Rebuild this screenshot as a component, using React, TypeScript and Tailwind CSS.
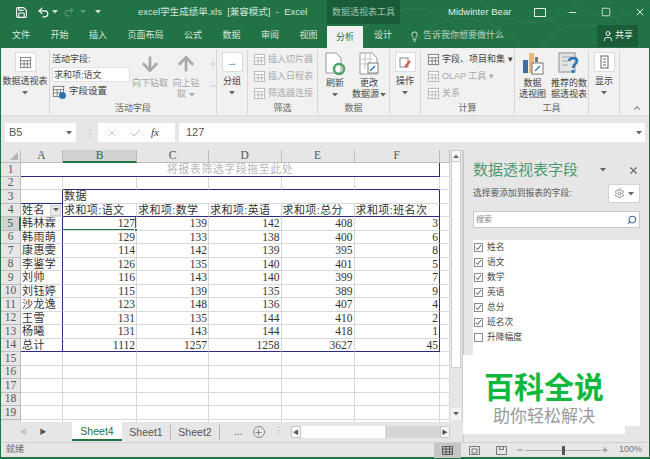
import { ReactNode } from 'react';
import { ArrowDown, ArrowUp, ChevronUp, Lightbulb, Minus, Plus, Redo2, Save, Search, Settings, Square, Undo2, User, X } from 'lucide-react';

const RIBBON_TABS = ['文件', '开始', '插入', '页面布局', '公式', '数据', '审阅', '视图'];

const ROWS = [
  ['韩林霖', '127', '139', '142', '408', '3'],
  ['韩雨萌', '129', '133', '138', '400', '6'],
  ['康惠雯', '114', '142', '139', '395', '8'],
  ['李鉴学', '126', '135', '140', '401', '5'],
  ['刘帅', '116', '143', '140', '399', '7'],
  ['刘钰婷', '115', '139', '135', '389', '9'],
  ['沙龙逸', '123', '148', '136', '407', '4'],
  ['王雪', '131', '135', '144', '410', '2'],
  ['杨曦', '131', '143', '144', '418', '1'],
  ['总计', '1112', '1257', '1258', '3627', '45'],
];

const FIELDS = [
  ['姓名', true],
  ['语文', true],
  ['数学', true],
  ['英语', true],
  ['总分', true],
  ['班名次', true],
  ['升降幅度', false],
] as const;

const HEADERS = ['求和项:语文', '求和项:数学', '求和项:英语', '求和项:总分', '求和项:班名次'];

function Caret({ className = 'text-[#666]' }: { className?: string }) {
  return (
    <svg width="6" height="4" viewBox="0 0 6 4" className={className}>
      <path d="M0 0h6L3 3.5z" fill="currentColor" />
    </svg>
  );
}

function Sheet({ dim }: { dim?: boolean }) {
  return (
    <svg width="13" height="13" viewBox="0 0 14 14" fill="none" stroke={dim ? '#b5b5b5' : '#7a7a7a'}>
      <rect x="1.5" y="1.5" width="11" height="11" fill="#fff" />
      <path d="M1.5 5h11M5.5 5v7.5M9 5v7.5M1.5 8.5h11" />
    </svg>
  );
}

function BoxButton({ label, icon }: { label: string; icon: ReactNode }) {
  return (
    <div className="flex flex-col items-center pt-[2px]">
      <div className="w-[21px] h-[20px] bg-white border border-[#dcdcdc] flex items-center justify-center">{icon}</div>
      <div className="mt-[4px] text-[9px] leading-[11px] whitespace-nowrap">{label}</div>
      <div className="mt-[4px]"><Caret /></div>
    </div>
  );
}

function Group({ width, label, children }: { width: string; label?: string; children: ReactNode }) {
  return (
    <div className={`${width} flex flex-col shrink-0 h-[64px] mt-[2px] border-r border-[#d6d6d6]`}>
      <div className="flex-1 min-h-0">{children}</div>
      <div className="h-[12px] text-center text-[9px] leading-[12px] text-[#666]">{label}</div>
    </div>
  );
}

function SmallRow({ icon, label, dim }: { icon: ReactNode; label: string; dim?: boolean }) {
  return (
    <div className={`h-[17px] flex items-center gap-[2px] text-[9px] whitespace-nowrap ${dim ? 'text-[#a8a8a8]' : 'text-[#444]'}`}>
      {icon}
      <span>{label}</span>
    </div>
  );
}

function Ribbon() {
  return (
    <div className="h-[68px] bg-[#f1f1f1] flex text-[#444] relative border-b border-[#dadada]">
      <Group width="w-[49px]">
        <div className="flex flex-col items-center pt-[2px]">
          <div className="w-[21px] h-[20px] bg-white border border-[#dcdcdc] flex items-center justify-center"><Sheet /></div>
          <div className="mt-[4px] text-[9px] leading-[11px] whitespace-nowrap">数据透视表</div>
          <div className="mt-[4px]"><Caret /></div>
        </div>
      </Group>

      <Group width="w-[167px]" label="活动字段">
        <div className="flex pl-[2px]">
          <div className="w-[78px] shrink-0">
            <div className="text-[9px] leading-[16px] mt-[1px]">活动字段:</div>
            <div className="h-[15px] bg-white border border-[#e2e2e2] text-[9px] leading-[14px] pl-[1px]">求和项:语文</div>
            <div className="flex items-center mt-[2px] text-[9.5px] leading-[14px]">
              <div className="relative">
                <Sheet />
                <div className="absolute right-[-1px] bottom-[-1px] w-[7px] h-[7px] rounded-full bg-[#2e75b6]" />
              </div>
              <span className="ml-[4px]">字段设置</span>
            </div>
          </div>
          <div className="w-[38px] ml-[1px] flex flex-col items-center text-[#a5a5a5] pt-[3px] shrink-0">
            <ArrowDown size={22} strokeWidth={3} className="text-[#a9a9a9]" />
            <div className="mt-[3px] text-[9px] leading-[11px] whitespace-nowrap">向下钻取</div>
          </div>
          <div className="w-[30px] ml-[2px] flex flex-col items-center text-[#a5a5a5] pt-[3px] shrink-0">
            <ArrowUp size={22} strokeWidth={3} className="text-[#a9a9a9]" />
            <div className="mt-[3px] text-[9px] leading-[11px] whitespace-nowrap">向上钻</div>
            <div className="text-[9px] leading-[11px] flex items-center gap-[3px]">取<Caret className="text-[#aaa]" /></div>
          </div>
          <div className="flex flex-col gap-[12px] pt-[9px] pl-[7px] text-[#b9c9d6]">
            <Plus size={10} />
            <Minus size={10} />
          </div>
        </div>
      </Group>

      <Group width="w-[31px]">
        <BoxButton label="分组" icon={<span className="text-[#2e75b6] text-[11px] font-bold leading-none">→</span>} />
      </Group>

      <Group width="w-[70px]" label="筛选">
        <div className="pl-[5px] pt-[1px]">
          <SmallRow dim icon={<Sheet dim />} label="插入切片器" />
          <SmallRow dim icon={<Sheet dim />} label="插入日程表" />
          <SmallRow dim icon={<Sheet dim />} label="筛选器连接" />
        </div>
      </Group>

      <Group width="w-[72px]" label="数据">
        <div className="flex pl-[5px] pt-[2px]">
          <div className="w-[24px] flex flex-col items-center">
            <svg width="22" height="24" viewBox="0 0 22 24" fill="none">
              <path d="M2 1h10l5 5v15H2z" fill="#fff" stroke="#9a9a9a" />
              <circle cx="15" cy="17" r="5" fill="none" stroke="#4aa564" strokeWidth="2.5" />
            </svg>
            <div className="mt-[2px] text-[9px] leading-[11px]">刷新</div>
            <div className="mt-[4px]"><Caret /></div>
          </div>
          <div className="w-[40px] ml-[2px] flex flex-col items-center">
            <svg width="22" height="24" viewBox="0 0 22 24" fill="none">
              <path d="M2 1h12l5 5v16H2z" fill="#fff" stroke="#9a9a9a" />
              <path d="M2 7h12M2 12h12M7 1v16M12 1v16" stroke="#c4c4c4" />
              <rect x="10" y="11" width="10" height="10" fill="#fff" stroke="#7a7a7a" />
              <path d="M12 19l5-5" stroke="#2e75b6" strokeWidth="1.4" />
            </svg>
            <div className="mt-[2px] text-[9px] leading-[11px]">更改</div>
            <div className="text-[9px] leading-[11px] flex items-center gap-[1px] whitespace-nowrap">数据源<Caret /></div>
          </div>
        </div>
      </Group>

      <Group width="w-[31px]">
        <BoxButton
          label="操作"
          icon={
            <svg width="13" height="13" viewBox="0 0 13 13" fill="none">
              <rect x="1" y="2" width="8" height="9" stroke="#888" />
              <path d="M6 11l5-6" stroke="#d9534f" strokeWidth="2" />
            </svg>
          }
        />
      </Group>

      <Group width="w-[94px]" label="计算">
        <div className="pl-[6px] pt-[1px]">
          <SmallRow icon={<Sheet />} label="字段、项目和集 ▾" />
          <SmallRow dim icon={<Sheet dim />} label="OLAP 工具 ▾" />
          <SmallRow dim icon={<Sheet dim />} label="关系" />
        </div>
      </Group>

      <Group width="w-[74px]" label="工具">
        <div className="flex pt-[2px] pl-[1px]">
          <div className="w-[33px] flex flex-col items-center">
            <svg width="22" height="24" viewBox="0 0 22 24" fill="none">
              <rect x="1" y="8" width="5" height="13" fill="#3d6ea5" />
              <rect x="7" y="1" width="5" height="20" fill="#e9b872" />
              <rect x="13" y="5" width="3" height="5" fill="#777" />
              <rect x="10" y="11" width="11" height="11" fill="#fff" stroke="#777" />
              <path d="M13 19l5-5" stroke="#2e75b6" strokeWidth="1.3" />
            </svg>
            <div className="mt-[2px] text-[9px] leading-[11px]">数据</div>
            <div className="text-[9px] leading-[11px] whitespace-nowrap">透视图</div>
          </div>
          <div className="w-[38px] flex flex-col items-center ml-[1px]">
            <svg width="22" height="24" viewBox="0 0 22 24" fill="none">
              <rect x="1" y="1" width="16" height="19" fill="#e4e4e4" stroke="#8f8f8f" />
              <path d="M4 5h10M4 9h6M4 13h6" stroke="#a5a5a5" />
              <path d="M11 9c1-4 8-4 8 0 0 3-4 3-4 7" stroke="#2e75b6" strokeWidth="2.6" />
              <rect x="13.6" y="18" width="2.8" height="3" fill="#2e75b6" />
            </svg>
            <div className="mt-[2px] text-[9px] leading-[11px] whitespace-nowrap">推荐的数</div>
            <div className="text-[9px] leading-[11px] whitespace-nowrap">据透视表</div>
          </div>
        </div>
      </Group>

      <Group width="w-[31px]">
        <BoxButton
          label="显示"
          icon={
            <svg width="9" height="14" viewBox="0 0 9 14" fill="none" stroke="#666">
              <rect x="1" y="1" width="7" height="12" />
              <path d="M3 4h3M3 7h3M3 10h3" />
            </svg>
          }
        />
      </Group>

      <ChevronUp size={10} strokeWidth={2.5} className="absolute right-[7px] bottom-[2px] text-[#666]" />
    </div>
  );
}

function SheetGrid() {
  const head = 'bg-[#e6e6e6] border-r border-b border-[#bdbdbd] flex items-center justify-center text-[11.5px] font-["Liberation_Serif",serif] text-[#555]';
  const line = 'border-r border-b border-[#d9d9d9]';
  const navyR = 'border-r border-b border-[#d9d9d9] border-r-[#2a2c80]';
  const navyB = 'border-r border-b border-[#d9d9d9] border-b-[#2a2c80]';
  const navyRB = 'border-r border-b border-[#d9d9d9] border-r-[#2a2c80] border-b-[#2a2c80]';
  const num = 'text-right pr-[1px] text-[11.5px] leading-[13px] font-["Liberation_Serif",serif] text-[#333] overflow-hidden';
  const cjk = 'pl-[1px] text-[11px] tracking-[0.4px] leading-[13px] text-[#333] whitespace-nowrap overflow-hidden';

  return (
    <div className="w-[449px] h-[272px] overflow-hidden bg-white">
      <div className="grid grid-cols-[20px_42px_74px_72px_72.5px_73px_85.5px_9.5px] grid-rows-[13px_repeat(20,13.5px)]">
        <div className="bg-[#e6e6e6] border-r border-b border-[#bdbdbd] flex items-end justify-end pr-[2px] pb-[2px]">
          <div className="w-0 h-0 border-l-[8px] border-l-transparent border-b-[8px] border-b-[#b5b5b5]" />
        </div>
        <div className={head}>A</div>
        <div className="bg-[#d2d2d2] border-r border-b-2 border-r-[#bdbdbd] border-b-[#217346] flex items-center justify-center text-[11.5px] font-['Liberation_Serif',serif] text-[#2a6a45]">B</div>
        <div className={head}>C</div>
        <div className={head}>D</div>
        <div className={head}>E</div>
        <div className={head}>F</div>
        <div className={head}></div>

        <div className={head}>1</div>
        <div className={`col-span-6 text-center text-[11px] leading-[13px] text-[#b8b8b8] tracking-[0.5px] ${navyRB}`}>将报表筛选字段拖至此处</div>
        <div className={line}></div>

        <div className={head}>2</div>
        <div className={line}></div>
        <div className={navyB}></div>
        <div className={navyB}></div>
        <div className={navyB}></div>
        <div className={navyB}></div>
        <div className={navyB}></div>
        <div className={line}></div>

        <div className={head}>3</div>
        <div className={navyRB}></div>
        <div className={`col-span-5 ${cjk} ${navyR}`}>数据</div>
        <div className={line}></div>

        <div className={head}>4</div>
        <div className={`relative ${cjk} ${navyR}`}>
          姓名
          <div className="absolute right-[1px] top-[1px] w-[11px] h-[11px] bg-[#e8e8e8] border border-[#cfcfcf] flex items-center justify-center"><Caret /></div>
        </div>
        {HEADERS.map((h, i) => (
          <div key={h} className={`${cjk} ${i === 4 ? navyRB : navyB}`}>{h}</div>
        ))}
        <div className={line}></div>

        {ROWS.map((row, r) => {
          const last = r === ROWS.length - 1;
          return [
            <div key={`h${r}`} className={r === 0 ? "bg-[#d2d2d2] border-r-2 border-b border-r-[#217346] border-b-[#bdbdbd] flex items-center justify-center text-[11.5px] font-['Liberation_Serif',serif] text-[#2a6a45]" : head}>{r + 5}</div>,
            <div key={`a${r}`} className={`${cjk} ${last ? navyRB : navyR}`}>{row[0]}</div>,
            ...row.slice(1).map((v, c) => {
              const border = c === 4 ? (last ? navyRB : navyR) : last ? navyB : line;
              const selected = r === 0 && c === 0;
              return selected ? (
                <div key={`${r}-${c}`} className={`relative ${border} text-right pr-[1px] text-[11.5px] leading-[13px] font-['Liberation_Serif',serif] text-[#333]`}>
                  {v}
                  <div className="absolute inset-0 border-b border-r border-[#217346]" />
                  <div className="absolute right-[-2px] bottom-[-2px] w-[4px] h-[4px] bg-[#217346] border border-white" />
                </div>
              ) : (
                <div key={`${r}-${c}`} className={`${num} ${border}`}>{v}</div>
              );
            }),
            <div key={`g${r}`} className={line}></div>,
          ];
        })}

        {[15, 16, 17, 18, 19, 20].map((n) => [
          <div key={`h${n}`} className={head}>{n === 20 ? '' : n}</div>,
          ...[0, 1, 2, 3, 4, 5, 6].map((c) => <div key={`${n}-${c}`} className={line}></div>),
        ])}
      </div>
    </div>
  );
}

function VScroll() {
  return (
    <div className="w-[13px] h-[272px] bg-[#e6e6e6] flex flex-col pl-[1px] pr-[1px] border-r border-[#cfcfcf]">
      <div className="h-[12px] bg-[#f7f7f7] border border-[#c8c8c8] flex items-center justify-center rotate-180"><Caret /></div>
      <div className="h-[206px] bg-white border-x border-b border-[#d0d0d0]"></div>
      <div className="flex-1"></div>
      <div className="h-[12px] mb-[2px] bg-[#f3f3f3] flex items-center justify-center"><Caret /></div>
    </div>
  );
}

function SheetTabs() {
  return (
    <div className="h-[20px] bg-[#e6e6e6] flex items-center text-[10.5px] text-[#555]">
      <span className="w-[20px] text-center text-[#c4c4c4] text-[7px] ml-[12px]">◀</span>
      <span className="w-[20px] text-center text-[#555] text-[7px]">▶</span>
      <div className="ml-[19px] w-[50px] h-[19px] -mt-[1px] bg-white border-b-2 border-[#217346] text-[#217346] text-center leading-[18px]">Sheet4</div>
      <div className="w-[49px] text-center border-r border-[#b5b5b5] leading-[15px]">Sheet1</div>
      <div className="w-[49px] text-center border-r border-[#b5b5b5] leading-[15px]">Sheet2</div>
      <span className="ml-[14px] text-[#666]">...</span>
      <div className="ml-[10px] w-[12px] h-[12px] rounded-full border border-[#8a8a8a] flex items-center justify-center">
        <Plus size={9} className="text-[#666]" />
      </div>
      <span className="ml-[9px] text-[#999] text-[9px]">⋮</span>
      <div className="ml-[8px] w-[159px] h-[12px] flex items-stretch bg-[#d6d6d6]">
        <div className="w-[10px] bg-[#f7f7f7] border border-[#c8c8c8] text-[6px] leading-[10px] text-center">◀</div>
        <div className="w-[84px] bg-white"></div>
        <div className="flex-1"></div>
        <div className="w-[10px] bg-[#f7f7f7] border border-[#c8c8c8] text-[6px] leading-[10px] text-center">▶</div>
      </div>
    </div>
  );
}

function FieldPanel() {
  return (
    <div className="flex-1 h-[292px] bg-[#e6e6e6] border-l border-[#c8c8c8] pl-[9px] pr-[9px] pt-[10px] flex flex-col">
      <div className="flex items-center h-[20px]">
        <div className="text-[15px] leading-[20px] text-[#4d9a72] whitespace-nowrap">数据透视表字段</div>
        <div className="ml-[22px]"><Caret /></div>
        <X size={11} strokeWidth={2.5} className="ml-[22px] text-[#666]" />
      </div>
      <div className="flex items-center h-[21px] mt-[3px]">
        <div className="text-[8.75px] text-[#555] whitespace-nowrap">选择要添加到报表的字段:</div>
        <div className="ml-auto w-[32px] h-[19px] bg-white border border-[#d4d4d4] flex items-center justify-center gap-[3px]">
          <Settings size={11} className="text-[#888]" />
          <Caret />
        </div>
      </div>
      <div className="h-[17px] mt-[7px] bg-white border border-[#c9c9c9] flex items-center justify-between px-[2px] text-[8px] text-[#888]">
        <span>搜索</span>
        <Search size={10} strokeWidth={2.5} className="text-[#3b6ea5] -scale-x-100" />
      </div>
      <div className="h-[186px] mt-[12px] bg-white flex flex-col">
        {FIELDS.map(([name, checked]) => (
          <div key={name} className="h-[15px] flex items-center text-[8.75px] text-[#444]">
            <div className="ml-[1px] w-[9px] h-[9px] border border-[#8d8d8d] flex items-center justify-center bg-white">
              {checked && (
                <svg width="7" height="7" viewBox="0 0 7 7" fill="none">
                  <path d="M1 3.5l1.7 2L6 1" stroke="#555" />
                </svg>
              )}
            </div>
            <span className="ml-[4px] whitespace-nowrap">{name}</span>
          </div>
        ))}
      </div>
    </div>
  );
}

export default function App() {
  return (
    <div className="relative w-[650px] h-[459px] overflow-hidden bg-[#217346] font-['Liberation_Sans','Noto_Sans_CJK_SC',sans-serif]">
      {/* title bar */}
      <div className="relative h-[24px] flex items-center text-[#d5e6dc] text-[11px]">
        <svg className="absolute right-0 top-0 opacity-20" width="300" height="48" viewBox="0 0 300 48" fill="none" stroke="#5aa57c">
          <path d="M0 40C40 0 80 0 110 30M60 48C90 10 130 8 170 44M130 0c30 30 70 30 100 0M190 48c20-30 60-30 90-6M230 10c20 10 50 10 70-8" />
        </svg>
        <div className="relative w-[327px] shrink-0 flex items-center">
          <Save size={13} className="ml-[15px] text-white" />
          <Undo2 size={13} className="ml-[9px] text-white" />
          <Caret className="ml-[2px] text-[#cfe2d7]" />
          <Redo2 size={12} className="ml-[5px] text-[#5f9c7c]" />
          <Caret className="ml-[5px] text-[#5f9c7c]" />
          <Caret className="ml-[9px] text-[#cfe2d7]" />
          <div className="ml-[37px] text-[9.5px] whitespace-nowrap">excel学生成绩单.xls&nbsp; [兼容模式]&nbsp; -&nbsp; Excel</div>
        </div>
        <div className="relative w-[73px] shrink-0 h-[24px] bg-[#1a5c38] text-[9px] text-[#9cc4ad] text-center leading-[24px] whitespace-nowrap">数据透视表工具</div>
        <div className="relative ml-[48px] w-[64px] shrink-0 text-[9.5px] text-[#e0ece5] whitespace-nowrap">Midwinter Bear</div>
        <div className="relative ml-[22px] w-[12px] h-[9px] border border-[#e0ece5]"></div>
        <Minus size={11} className="relative ml-[21px] text-[#e0ece5]" />
        <Square size={10} className="relative ml-[23px] text-[#e0ece5]" />
        <X size={12} className="relative ml-[23px] text-[#e0ece5]" />
      </div>

      {/* tab row */}
      <div className="relative h-[24px] flex items-center text-[9px] text-[#d9e8df]">
        <div className="flex w-[326px] shrink-0 pl-[12px] gap-[20.5px] whitespace-nowrap">
          {RIBBON_TABS.map((t) => <span key={t}>{t}</span>)}
        </div>
        <div className="ml-[1px] w-[36px] h-[22px] self-end bg-[#f1f1f1] text-[#217346] text-center leading-[22px]">分析</div>
        <span className="ml-[11px]">设计</span>
        <Lightbulb size={11} className="ml-[17px] text-[#e0ece5]" />
        <span className="ml-[3px] text-[#b9d3c4] whitespace-nowrap">告诉我你想要做什么</span>
        <div className="ml-auto mr-[12px] w-[41px] h-[22px] bg-[#1a5c38] flex items-center justify-center gap-[1px] text-[#eef5f1]">
          <User size={12} />
          <span>共享</span>
        </div>
      </div>

      <div className="ml-[1px] mr-[1px] h-[409px] bg-[#e6e6e6] flex flex-col">
        <Ribbon />

        {/* formula bar */}
        <div className="h-[34px] shrink-0 flex items-center pl-[4px] pr-[4px] bg-[#e6e6e6] text-[#555]">
          <div className="w-[71px] h-[19px] -mt-[1px] bg-white flex items-center justify-between pl-[4px] pr-[4px] text-[11px]">
            <span>B5</span>
            <Caret />
          </div>
          <span className="ml-[9px] w-[13px] text-[#aaa] text-[10px]">⋮</span>
          <div className="w-[77px] h-[19px] -mt-[1px] bg-white flex items-center text-[#bdbdbd]">
            <X size={10} className="ml-[9px]" />
            <svg width="12" height="10" viewBox="0 0 12 10" fill="none" className="ml-[13px]">
              <path d="M1 5l3 3 6-6" stroke="currentColor" />
            </svg>
            <span className="ml-[9px] font-['Liberation_Serif',serif] italic text-[11px] text-[#444]">fx</span>
          </div>
          <div className="ml-[4px] flex-1 h-[19px] -mt-[1px] bg-white flex items-center justify-between pl-[7px] pr-[3px] text-[11px]">
            <span>127</span>
            <Caret />
          </div>
        </div>

        {/* sheet + field list */}
        <div className="h-[292px] shrink-0 flex">
          <div className="w-[462px] shrink-0 flex flex-col">
            <div className="flex">
              <SheetGrid />
              <VScroll />
            </div>
            <SheetTabs />
          </div>
          <FieldPanel />
        </div>

        {/* status bar */}
        <div className="h-[15px] shrink-0 bg-[#e6e6e6] border-t border-[#d0d0d0] flex items-center text-[9px] text-[#666]">
          <span className="ml-[5px]">就绪</span>
          <div className="ml-[410px] w-[27px] h-[15px] bg-[#c6c6c6] flex items-center justify-center">
            <svg width="11" height="9" viewBox="0 0 11 9" fill="none" stroke="#555"><path d="M.5.5h10v8H.5zM.5 3h10M.5 6h10M4 .5v8M7.5 .5v8" /></svg>
          </div>
          <svg width="11" height="9" viewBox="0 0 11 9" fill="none" stroke="#777" className="ml-[8px]"><path d="M.5.5h10v8H.5zM3 3h5v4H3z" /></svg>
          <svg width="11" height="9" viewBox="0 0 11 9" fill="none" stroke="#777" className="ml-[16px]"><path d="M.5.5h10v8H.5zM3.5.5v3h4v-3" /></svg>
          <Minus size={8} className="ml-[9px] text-[#555]" />
          <div className="relative w-[76px] h-px bg-[#aaa] ml-[1px]">
            <div className="absolute left-[37px] -top-[4px] w-[3px] h-[9px] bg-[#555]"></div>
          </div>
          <Plus size={8} className="text-[#555]" />
          <span className="ml-[10px] text-[#777]">100%</span>
        </div>
      </div>

      {/* watermark */}
      <div className="absolute left-[463px] top-[355px] w-[162px] h-[79px] bg-white flex flex-col items-center pt-[15px]">
        <div className="text-[30px] leading-[36px] font-bold text-[#10b93d] whitespace-nowrap">百科全说</div>
        <div className="text-[17px] leading-[22px] text-[#9a9a9a] whitespace-nowrap">助你轻松解决</div>
      </div>
    </div>
  );
}
